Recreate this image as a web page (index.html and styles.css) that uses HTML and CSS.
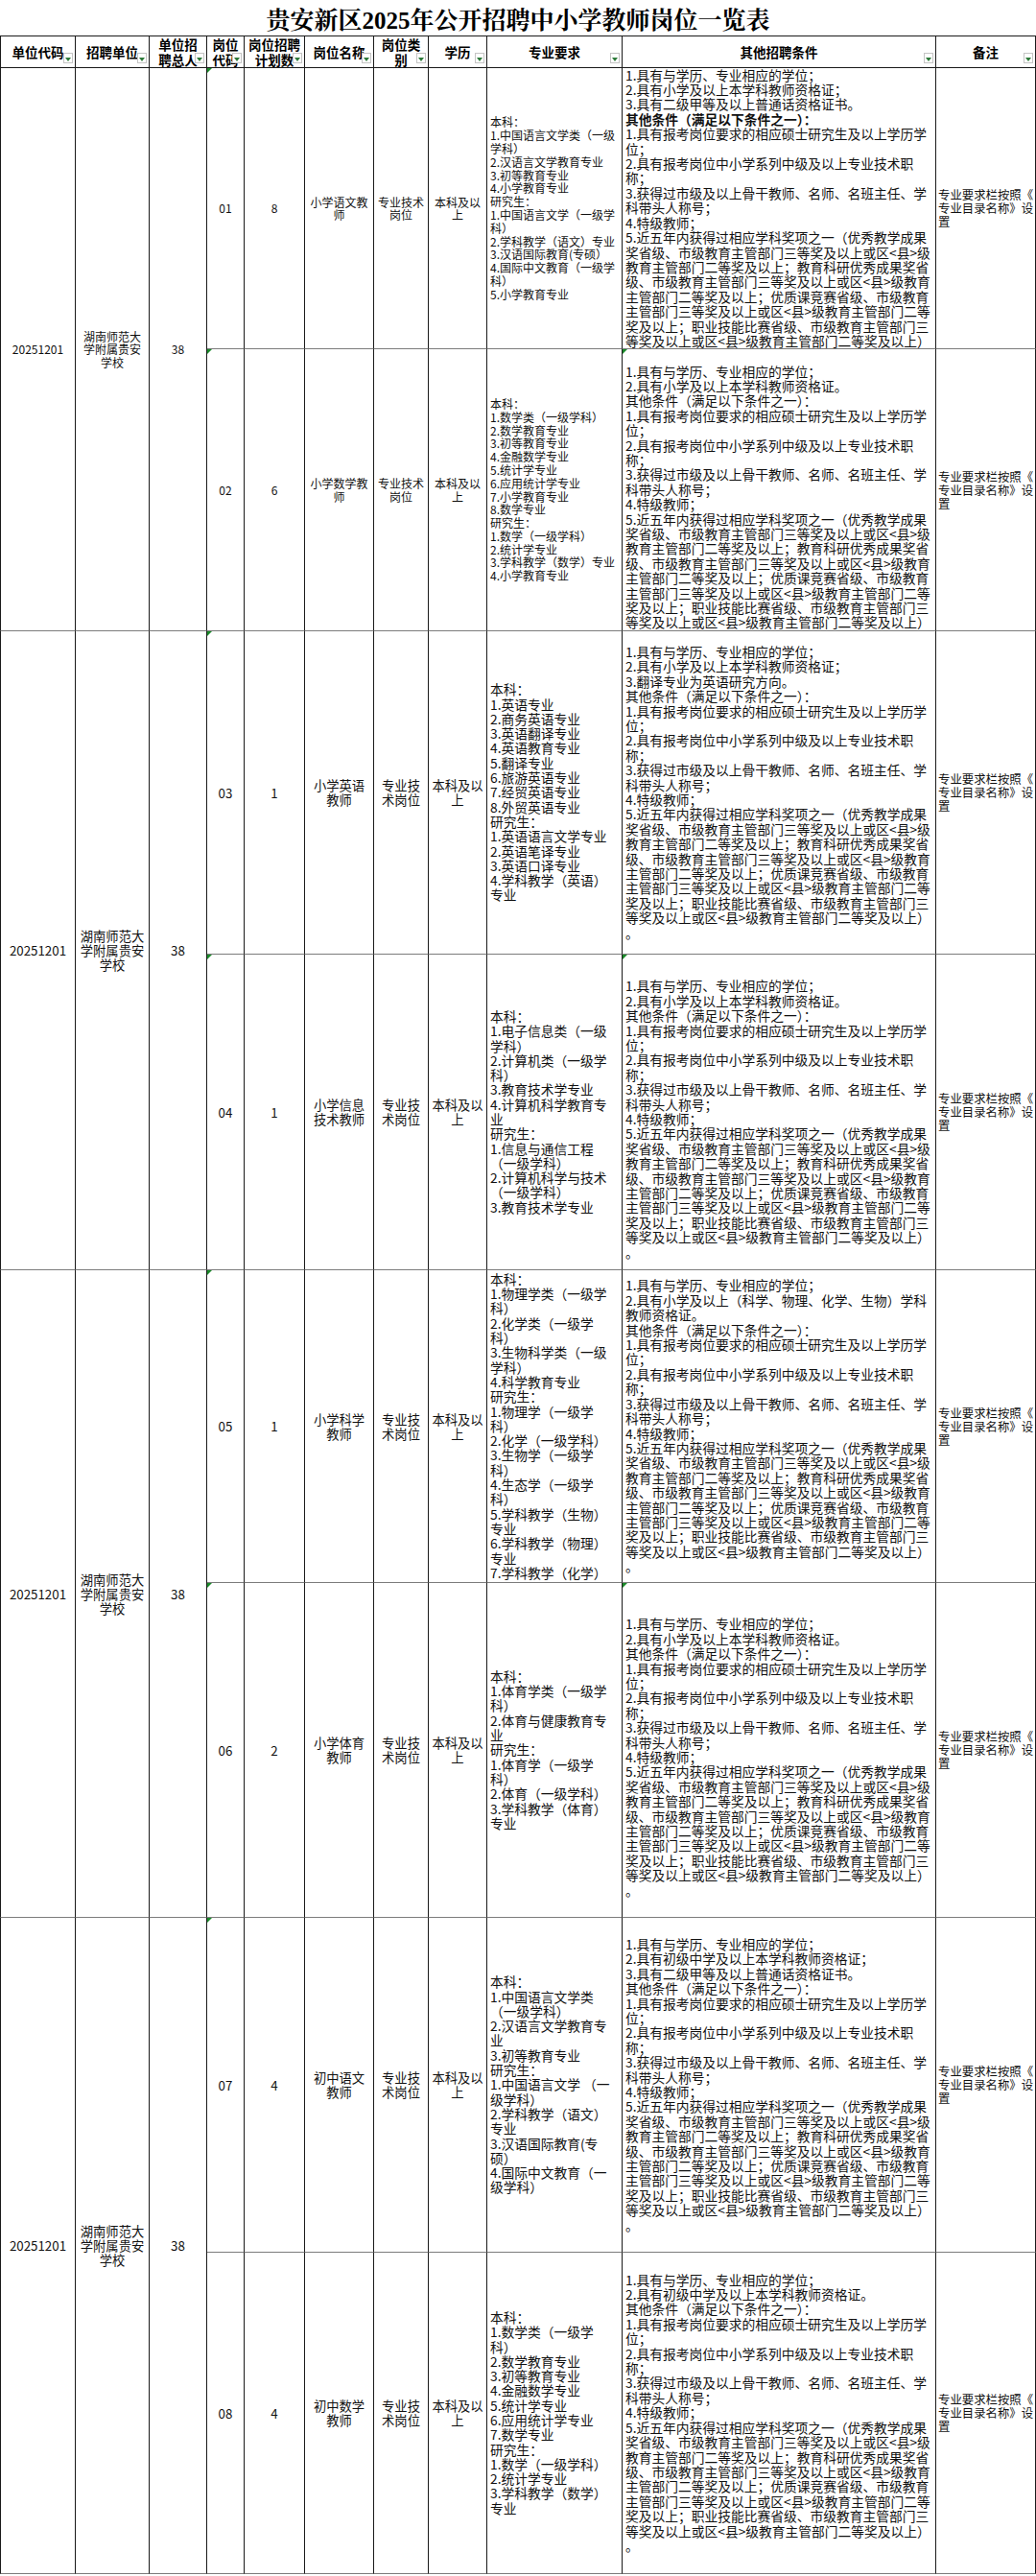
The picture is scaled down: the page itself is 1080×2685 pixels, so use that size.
FILE: index.html
```html
<!DOCTYPE html>
<html lang="zh-CN">
<head>
<meta charset="utf-8">
<title>贵安新区2025年公开招聘中小学教师岗位一览表</title>
<link rel="stylesheet" href="styles.css">
</head>
<body>
<div class="sheet">
  <div class="title">贵安新区2025年公开招聘中小学教师岗位一览表</div>
  <div class="grid">
    <div class="cell h first c1"><span>单位代码</span><i class="btn"></i></div>
    <div class="cell h c2"><span>招聘单位</span><i class="btn"></i></div>
    <div class="cell h c3"><span>单位招<br>聘总人</span><i class="btn"></i></div>
    <div class="cell h c4"><span>岗位<br>代码</span><i class="btn"></i></div>
    <div class="cell h c5"><span>岗位招聘<br>计划数</span><i class="btn"></i></div>
    <div class="cell h c6"><span>岗位名称</span><i class="btn"></i></div>
    <div class="cell h c7"><span>岗位类<br>别</span><i class="btn"></i></div>
    <div class="cell h c8"><span>学历</span><i class="btn"></i></div>
    <div class="cell h c9"><span>专业要求</span><i class="btn"></i></div>
    <div class="cell h c10"><span>其他招聘条件</span><i class="btn"></i></div>
    <div class="cell h c11"><span>备注</span><i class="btn"></i></div>

    <!-- row 01 -->
    <div class="cell first c1 span2 ctr sm">20251201</div>
    <div class="cell c2 span2 ctr sm">湖南师范大<br>学附属贵安<br>学校</div>
    <div class="cell c3 span2 ctr sm">38</div>
    <div class="cell c4 ctr sm tri">01</div>
    <div class="cell c5 ctr sm">8</div>
    <div class="cell c6 ctr sm">小学语文教<br>师</div>
    <div class="cell c7 ctr sm">专业技术<br>岗位</div>
    <div class="cell c8 ctr sm">本科及以<br>上</div>
    <div class="cell c9 lft majs"><div class="txt">本科：<br>1.中国语言文学类（一级<br>学科）<br>2.汉语言文学教育专业<br>3.初等教育专业<br>4.小学教育专业<br>研究生：<br>1.中国语言文学（一级学<br>科）<br>2.学科教学（语文）专业<br>3.汉语国际教育(专硕）<br>4.国际中文教育（一级学<br>科）<br>5.小学教育专业</div></div>
    <div class="cell c10 lft oth"><div class="txt">1.具有与学历、专业相应的学位；<br>2.具有小学及以上本学科教师资格证；<br>3.具有二级甲等及以上普通话资格证书。<br><b>其他条件（满足以下条件之一）：</b><br>1.具有报考岗位要求的相应硕士研究生及以上学历学<br>位；<br>2.具有报考岗位中小学系列中级及以上专业技术职<br>称；<br>3.获得过市级及以上骨干教师、名师、名班主任、学<br>科带头人称号；<br>4.特级教师；<br>5.近五年内获得过相应学科奖项之一（优秀教学成果<br>奖省级、市级教育主管部门三等奖及以上或区&lt;县&gt;级<br>教育主管部门二等奖及以上；教育科研优秀成果奖省<br>级、市级教育主管部门三等奖及以上或区&lt;县&gt;级教育<br>主管部门二等奖及以上；优质课竞赛省级、市级教育<br>主管部门三等奖及以上或区&lt;县&gt;级教育主管部门二等<br>奖及以上；职业技能比赛省级、市级教育主管部门三<br>等奖及以上或区&lt;县&gt;级教育主管部门二等奖及以上）</div></div>
    <div class="cell c11 lft note"><div class="txt">专业要求栏按照《<br>专业目录名称》设<br>置</div></div>

    <!-- row 02 -->
    <div class="cell c4 ctr sm tri">02</div>
    <div class="cell c5 ctr sm">6</div>
    <div class="cell c6 ctr sm">小学数学教<br>师</div>
    <div class="cell c7 ctr sm">专业技术<br>岗位</div>
    <div class="cell c8 ctr sm">本科及以<br>上</div>
    <div class="cell c9 lft majs"><div class="txt">本科：<br>1.数学类（一级学科）<br>2.数学教育专业<br>3.初等教育专业<br>4.金融数学专业<br>5.统计学专业<br>6.应用统计学专业<br>7.小学教育专业<br>8.数学专业<br>研究生：<br>1.数学（一级学科）<br>2.统计学专业<br>3.学科教学（数学）专业<br>4.小学教育专业</div></div>
    <div class="cell c10 lft oth tri"><div class="txt"><br>1.具有与学历、专业相应的学位；<br>2.具有小学及以上本学科教师资格证。<br>其他条件（满足以下条件之一）：<br>1.具有报考岗位要求的相应硕士研究生及以上学历学<br>位；<br>2.具有报考岗位中小学系列中级及以上专业技术职<br>称；<br>3.获得过市级及以上骨干教师、名师、名班主任、学<br>科带头人称号；<br>4.特级教师；<br>5.近五年内获得过相应学科奖项之一（优秀教学成果<br>奖省级、市级教育主管部门三等奖及以上或区&lt;县&gt;级<br>教育主管部门二等奖及以上；教育科研优秀成果奖省<br>级、市级教育主管部门三等奖及以上或区&lt;县&gt;级教育<br>主管部门二等奖及以上；优质课竞赛省级、市级教育<br>主管部门三等奖及以上或区&lt;县&gt;级教育主管部门二等<br>奖及以上；职业技能比赛省级、市级教育主管部门三<br>等奖及以上或区&lt;县&gt;级教育主管部门二等奖及以上）</div></div>
    <div class="cell c11 lft note"><div class="txt">专业要求栏按照《<br>专业目录名称》设<br>置</div></div>

    <!-- row 03 -->
    <div class="cell first c1 span2 ctr md">20251201</div>
    <div class="cell c2 span2 ctr md">湖南师范大<br>学附属贵安<br>学校</div>
    <div class="cell c3 span2 ctr md">38</div>
    <div class="cell c4 ctr md tri">03</div>
    <div class="cell c5 ctr md">1</div>
    <div class="cell c6 ctr md">小学英语<br>教师</div>
    <div class="cell c7 ctr md">专业技<br>术岗位</div>
    <div class="cell c8 ctr md">本科及以<br>上</div>
    <div class="cell c9 lft majm"><div class="txt">本科：<br>1.英语专业<br>2.商务英语专业<br>3.英语翻译专业<br>4.英语教育专业<br>5.翻译专业<br>6.旅游英语专业<br>7.经贸英语专业<br>8.外贸英语专业<br>研究生：<br>1.英语语言文学专业<br>2.英语笔译专业<br>3.英语口译专业<br>4.学科教学（英语）<br>专业</div></div>
    <div class="cell c10 lft oth"><div class="txt">1.具有与学历、专业相应的学位；<br>2.具有小学及以上本学科教师资格证；<br>3.翻译专业为英语研究方向。<br>其他条件（满足以下条件之一）：<br>1.具有报考岗位要求的相应硕士研究生及以上学历学<br>位；<br>2.具有报考岗位中小学系列中级及以上专业技术职<br>称；<br>3.获得过市级及以上骨干教师、名师、名班主任、学<br>科带头人称号；<br>4.特级教师；<br>5.近五年内获得过相应学科奖项之一（优秀教学成果<br>奖省级、市级教育主管部门三等奖及以上或区&lt;县&gt;级<br>教育主管部门二等奖及以上；教育科研优秀成果奖省<br>级、市级教育主管部门三等奖及以上或区&lt;县&gt;级教育<br>主管部门二等奖及以上；优质课竞赛省级、市级教育<br>主管部门三等奖及以上或区&lt;县&gt;级教育主管部门二等<br>奖及以上；职业技能比赛省级、市级教育主管部门三<br>等奖及以上或区&lt;县&gt;级教育主管部门二等奖及以上）<br>。</div></div>
    <div class="cell c11 lft note"><div class="txt">专业要求栏按照《<br>专业目录名称》设<br>置</div></div>

    <!-- row 04 -->
    <div class="cell c4 ctr md tri">04</div>
    <div class="cell c5 ctr md">1</div>
    <div class="cell c6 ctr md">小学信息<br>技术教师</div>
    <div class="cell c7 ctr md">专业技<br>术岗位</div>
    <div class="cell c8 ctr md">本科及以<br>上</div>
    <div class="cell c9 lft majm"><div class="txt">本科：<br>1.电子信息类（一级<br>学科）<br>2.计算机类（一级学<br>科）<br>3.教育技术学专业<br>4.计算机科学教育专<br>业<br>研究生：<br>1.信息与通信工程<br>（一级学科）<br>2.计算机科学与技术<br>（一级学科）<br>3.教育技术学专业</div></div>
    <div class="cell c10 lft oth tri"><div class="txt"><br>1.具有与学历、专业相应的学位；<br>2.具有小学及以上本学科教师资格证。<br>其他条件（满足以下条件之一）：<br>1.具有报考岗位要求的相应硕士研究生及以上学历学<br>位；<br>2.具有报考岗位中小学系列中级及以上专业技术职<br>称；<br>3.获得过市级及以上骨干教师、名师、名班主任、学<br>科带头人称号；<br>4.特级教师；<br>5.近五年内获得过相应学科奖项之一（优秀教学成果<br>奖省级、市级教育主管部门三等奖及以上或区&lt;县&gt;级<br>教育主管部门二等奖及以上；教育科研优秀成果奖省<br>级、市级教育主管部门三等奖及以上或区&lt;县&gt;级教育<br>主管部门二等奖及以上；优质课竞赛省级、市级教育<br>主管部门三等奖及以上或区&lt;县&gt;级教育主管部门二等<br>奖及以上；职业技能比赛省级、市级教育主管部门三<br>等奖及以上或区&lt;县&gt;级教育主管部门二等奖及以上）<br>。</div></div>
    <div class="cell c11 lft note"><div class="txt">专业要求栏按照《<br>专业目录名称》设<br>置</div></div>

    <!-- row 05 -->
    <div class="cell first c1 span2 ctr md">20251201</div>
    <div class="cell c2 span2 ctr md">湖南师范大<br>学附属贵安<br>学校</div>
    <div class="cell c3 span2 ctr md">38</div>
    <div class="cell c4 ctr md tri">05</div>
    <div class="cell c5 ctr md">1</div>
    <div class="cell c6 ctr md">小学科学<br>教师</div>
    <div class="cell c7 ctr md">专业技<br>术岗位</div>
    <div class="cell c8 ctr md">本科及以<br>上</div>
    <div class="cell c9 lft majm"><div class="txt">本科：<br>1.物理学类（一级学<br>科）<br>2.化学类（一级学<br>科）<br>3.生物科学类（一级<br>学科）<br>4.科学教育专业<br>研究生：<br>1.物理学（一级学<br>科）<br>2.化学（一级学科）<br>3.生物学（一级学<br>科）<br>4.生态学（一级学<br>科）<br>5.学科教学（生物）<br>专业<br>6.学科教学（物理）<br>专业<br>7.学科教学（化学）</div></div>
    <div class="cell c10 lft oth"><div class="txt">1.具有与学历、专业相应的学位；<br>2.具有小学及以上（科学、物理、化学、生物）学科<br>教师资格证。<br>其他条件（满足以下条件之一）：<br>1.具有报考岗位要求的相应硕士研究生及以上学历学<br>位；<br>2.具有报考岗位中小学系列中级及以上专业技术职<br>称；<br>3.获得过市级及以上骨干教师、名师、名班主任、学<br>科带头人称号；<br>4.特级教师；<br>5.近五年内获得过相应学科奖项之一（优秀教学成果<br>奖省级、市级教育主管部门三等奖及以上或区&lt;县&gt;级<br>教育主管部门二等奖及以上；教育科研优秀成果奖省<br>级、市级教育主管部门三等奖及以上或区&lt;县&gt;级教育<br>主管部门二等奖及以上；优质课竞赛省级、市级教育<br>主管部门三等奖及以上或区&lt;县&gt;级教育主管部门二等<br>奖及以上；职业技能比赛省级、市级教育主管部门三<br>等奖及以上或区&lt;县&gt;级教育主管部门二等奖及以上）<br>。</div></div>
    <div class="cell c11 lft note"><div class="txt">专业要求栏按照《<br>专业目录名称》设<br>置</div></div>

    <!-- row 06 -->
    <div class="cell c4 ctr md tri">06</div>
    <div class="cell c5 ctr md">2</div>
    <div class="cell c6 ctr md">小学体育<br>教师</div>
    <div class="cell c7 ctr md">专业技<br>术岗位</div>
    <div class="cell c8 ctr md">本科及以<br>上</div>
    <div class="cell c9 lft majm"><div class="txt">本科：<br>1.体育学类（一级学<br>科）<br>2.体育与健康教育专<br>业<br>研究生：<br>1.体育学（一级学<br>科）<br>2.体育（一级学科）<br>3.学科教学（体育）<br>专业</div></div>
    <div class="cell c10 lft oth tri"><div class="txt"><br>1.具有与学历、专业相应的学位；<br>2.具有小学及以上本学科教师资格证。<br>其他条件（满足以下条件之一）：<br>1.具有报考岗位要求的相应硕士研究生及以上学历学<br>位；<br>2.具有报考岗位中小学系列中级及以上专业技术职<br>称；<br>3.获得过市级及以上骨干教师、名师、名班主任、学<br>科带头人称号；<br>4.特级教师；<br>5.近五年内获得过相应学科奖项之一（优秀教学成果<br>奖省级、市级教育主管部门三等奖及以上或区&lt;县&gt;级<br>教育主管部门二等奖及以上；教育科研优秀成果奖省<br>级、市级教育主管部门三等奖及以上或区&lt;县&gt;级教育<br>主管部门二等奖及以上；优质课竞赛省级、市级教育<br>主管部门三等奖及以上或区&lt;县&gt;级教育主管部门二等<br>奖及以上；职业技能比赛省级、市级教育主管部门三<br>等奖及以上或区&lt;县&gt;级教育主管部门二等奖及以上）<br>。</div></div>
    <div class="cell c11 lft note"><div class="txt">专业要求栏按照《<br>专业目录名称》设<br>置</div></div>

    <!-- row 07 -->
    <div class="cell first c1 span2 ctr md">20251201</div>
    <div class="cell c2 span2 ctr md">湖南师范大<br>学附属贵安<br>学校</div>
    <div class="cell c3 span2 ctr md">38</div>
    <div class="cell c4 ctr md tri">07</div>
    <div class="cell c5 ctr md">4</div>
    <div class="cell c6 ctr md">初中语文<br>教师</div>
    <div class="cell c7 ctr md">专业技<br>术岗位</div>
    <div class="cell c8 ctr md">本科及以<br>上</div>
    <div class="cell c9 lft majm"><div class="txt">本科：<br>1.中国语言文学类<br>（一级学科）<br>2.汉语言文学教育专<br>业<br>3.初等教育专业<br>研究生：<br>1.中国语言文学 （一<br>级学科）<br>2.学科教学（语文）<br>专业<br>3.汉语国际教育(专<br>硕）<br>4.国际中文教育（一<br>级学科）</div></div>
    <div class="cell c10 lft oth"><div class="txt">1.具有与学历、专业相应的学位；<br>2.具有初级中学及以上本学科教师资格证；<br>3.具有二级甲等及以上普通话资格证书。<br>其他条件（满足以下条件之一）：<br>1.具有报考岗位要求的相应硕士研究生及以上学历学<br>位；<br>2.具有报考岗位中小学系列中级及以上专业技术职<br>称；<br>3.获得过市级及以上骨干教师、名师、名班主任、学<br>科带头人称号；<br>4.特级教师；<br>5.近五年内获得过相应学科奖项之一（优秀教学成果<br>奖省级、市级教育主管部门三等奖及以上或区&lt;县&gt;级<br>教育主管部门二等奖及以上；教育科研优秀成果奖省<br>级、市级教育主管部门三等奖及以上或区&lt;县&gt;级教育<br>主管部门二等奖及以上；优质课竞赛省级、市级教育<br>主管部门三等奖及以上或区&lt;县&gt;级教育主管部门二等<br>奖及以上；职业技能比赛省级、市级教育主管部门三<br>等奖及以上或区&lt;县&gt;级教育主管部门二等奖及以上）<br>。</div></div>
    <div class="cell c11 lft note"><div class="txt">专业要求栏按照《<br>专业目录名称》设<br>置</div></div>

    <!-- row 08 -->
    <div class="cell c4 ctr md">08</div>
    <div class="cell c5 ctr md">4</div>
    <div class="cell c6 ctr md">初中数学<br>教师</div>
    <div class="cell c7 ctr md">专业技<br>术岗位</div>
    <div class="cell c8 ctr md">本科及以<br>上</div>
    <div class="cell c9 lft majm"><div class="txt">本科：<br>1.数学类（一级学<br>科）<br>2.数学教育专业<br>3.初等教育专业<br>4.金融数学专业<br>5.统计学专业<br>6.应用统计学专业<br>7.数学专业<br>研究生：<br>1.数学（一级学科）<br>2.统计学专业<br>3.学科教学（数学）<br>专业</div></div>
    <div class="cell c10 lft oth"><div class="txt">1.具有与学历、专业相应的学位；<br>2.具有初级中学及以上本学科教师资格证。<br>其他条件（满足以下条件之一）：<br>1.具有报考岗位要求的相应硕士研究生及以上学历学<br>位；<br>2.具有报考岗位中小学系列中级及以上专业技术职<br>称；<br>3.获得过市级及以上骨干教师、名师、名班主任、学<br>科带头人称号；<br>4.特级教师；<br>5.近五年内获得过相应学科奖项之一（优秀教学成果<br>奖省级、市级教育主管部门三等奖及以上或区&lt;县&gt;级<br>教育主管部门二等奖及以上；教育科研优秀成果奖省<br>级、市级教育主管部门三等奖及以上或区&lt;县&gt;级教育<br>主管部门二等奖及以上；优质课竞赛省级、市级教育<br>主管部门三等奖及以上或区&lt;县&gt;级教育主管部门二等<br>奖及以上；职业技能比赛省级、市级教育主管部门三<br>等奖及以上或区&lt;县&gt;级教育主管部门二等奖及以上）<br>。</div></div>
    <div class="cell c11 lft note"><div class="txt">专业要求栏按照《<br>专业目录名称》设<br>置</div></div>
  </div>
</div>
</body>
</html>
```

FILE: styles.css
```css
html, body {
  margin: 0;
  padding: 0;
  background: #fff;
}

body {
  font-family: "Noto Sans CJK SC", "Noto Sans", sans-serif;
  color: #111;
}

.sheet {
  width: 1080px;
}

.title {
  height: 37px;
  display: flex;
  align-items: center;
  justify-content: center;
  font-family: "Liberation Serif", "Noto Serif CJK SC", "Noto Sans CJK SC", serif;
  font-weight: 700;
  font-size: 25px;
  letter-spacing: 0;
  color: #000;
}

.grid {
  display: grid;
  grid-template-columns: 79px 77px 60px 39px 63px 72px 57px 61px 141px 327px 104px;
  grid-template-rows: 34px 293px 294px 337px 329px 326px 349px 349px 335px;
}

.cell {
  box-sizing: border-box;
  border-right: 1px solid #1a1a1a;
  border-bottom: 1px solid #7c7c7c;
  overflow: hidden;
  display: flex;
  align-items: center;
  position: relative;
  min-width: 0;
  min-height: 0;
}

.first { border-left: 1px solid #1a1a1a; }

.c1 { grid-column: 1; }
.c2 { grid-column: 2; }
.c3 { grid-column: 3; }
.c4 { grid-column: 4; }
.c5 { grid-column: 5; }
.c6 { grid-column: 6; }
.c7 { grid-column: 7; }
.c8 { grid-column: 8; }
.c9 { grid-column: 9; }
.c10 { grid-column: 10; }
.c11 { grid-column: 11; }

.span2 { grid-row: span 2; }

/* header */
.h {
  border-top: 1px solid #1a1a1a;
  border-bottom: 1px solid #1a1a1a;
  justify-content: center;
  text-align: center;
  font-weight: 700;
  font-size: 13.5px;
  line-height: 16px;
  white-space: nowrap;
  color: #000;
}

.btn {
  position: absolute;
  right: 2px;
  bottom: 4px;
  width: 8px;
  height: 9px;
  border: 1px solid #c4c4c4;
  background: #fff;
}

.btn::after {
  content: "";
  position: absolute;
  left: 1px;
  bottom: 1px;
  border-left: 3px solid transparent;
  border-right: 3px solid transparent;
  border-top: 4px solid #2d7a3a;
}

/* centered body cells */
.ctr {
  justify-content: center;
  text-align: center;
  white-space: nowrap;
}

.sm {
  font-size: 12px;
  line-height: 13.3px;
}

.md {
  font-size: 13.3px;
  line-height: 15px;
}

/* left aligned text cells */
.lft {
  justify-content: flex-start;
  text-align: left;
}

.txt {
  white-space: nowrap;
}

.majs {
  padding-left: 3px;
  font-size: 12px;
  line-height: 13.8px;
}

.majm {
  padding-left: 3px;
  font-size: 13.75px;
  line-height: 15.3px;
}

.oth {
  padding-left: 3px;
  font-size: 13.75px;
  line-height: 15.4px;
}

.oth b {
  font-weight: 700;
}

.note {
  padding-left: 2px;
  font-size: 12.4px;
  line-height: 14px;
}

/* green error-indicator triangle in the cell's top-left corner */
.tri::before {
  content: "";
  position: absolute;
  left: 0;
  top: 0;
  border-top: 5px solid #1b8a2a;
  border-right: 5px solid transparent;
}
```
